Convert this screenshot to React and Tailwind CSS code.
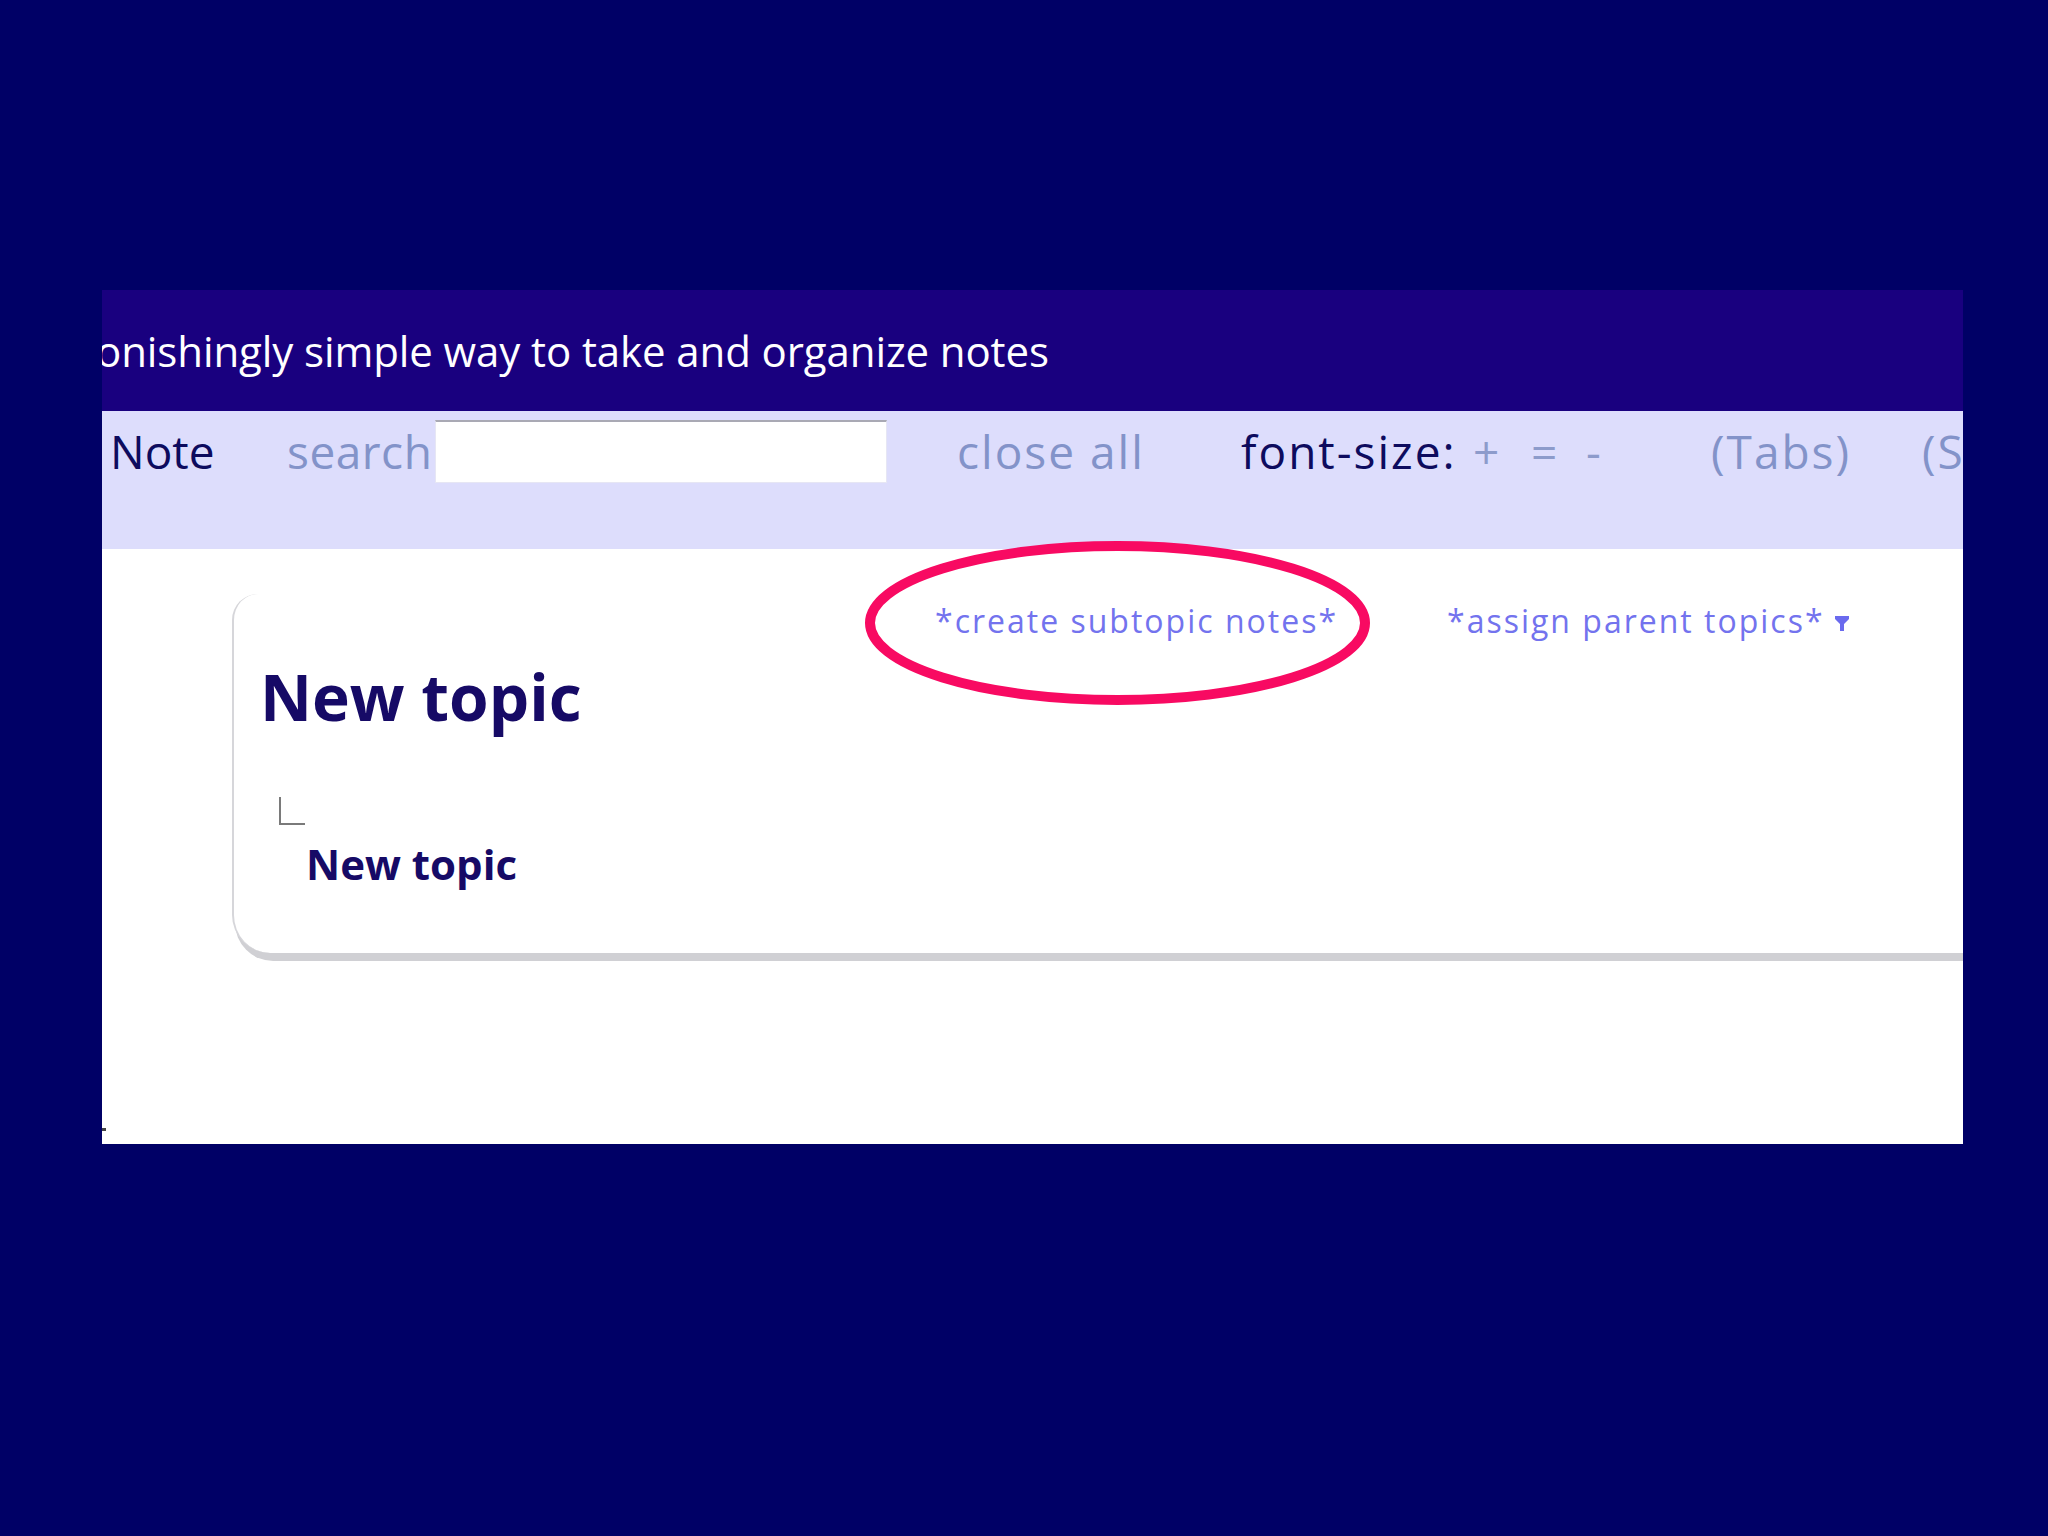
import React from 'react';

const font = { fontFamily: '"Open Sans", "DejaVu Sans", sans-serif' };

const Toolbar = () => (
  <div className="h-[138px] bg-[#ddddfc] shrink-0">
    <div className="flex items-center h-[63px] mt-[9px] pl-[8px] text-[46px] tracking-[2px] whitespace-nowrap">
      <span className="w-[177px] shrink-0 text-[#0d0b5e] tracking-[0px]">Note</span>
      <span className="w-[148px] shrink-0 text-[#8393c9] tracking-[0.5px]">search</span>
      <input
        type="text"
        className="w-[452px] h-[63px] shrink-0 bg-white border-t-2 border-t-[#a9a9b4] border-x border-x-[#e6e6f4] border-b border-b-[#e6e6f4] outline-none"
      />
      <span className="w-[284px] shrink-0 ml-[70px] text-[#8393c9]">close all</span>
      <span className="w-[232px] shrink-0 text-[#0d0b5e]">font-size:</span>
      <span className="w-[58px] shrink-0 text-[#8d9bcb]">+</span>
      <span className="w-[55px] shrink-0 text-[#8d9bcb]">=</span>
      <span className="w-[125px] shrink-0 text-[#8d9bcb]">-</span>
      <span className="w-[211px] shrink-0 text-[#8393c9]">(Tabs)</span>
      <span className="shrink-0 text-[#8393c9]">(S</span>
    </div>
  </div>
);

const TopicCard = () => (
  <div className="ml-[130px] mt-[45px] w-[1800px] shrink-0 bg-white border-l-2 border-[#d6d6da] rounded-tl-[26px] rounded-bl-[38px] shadow-[3px_8px_0_0_#d0d0d4] pl-[26px] pt-[7px] pb-[64px]">
    <div className="flex items-center h-[40px] text-[32px] tracking-[2px] text-[#7373ee] whitespace-nowrap">
      <span className="ml-[675px] w-[512px] shrink-0">*create subtopic notes*</span>
      <span className="shrink-0">*assign parent topics*</span>
      <svg className="ml-[10px] mt-[4px] shrink-0" width="14" height="15" viewBox="0 0 14 15">
        <path d="M0 0 H14 V3 L9 8 V15 H5 V8 L0 3 Z" fill="#6a6aee" />
      </svg>
      <span className="ml-[120px] shrink-0 text-[#c4c4f6]">(</span>
    </div>
    <h1 className="mt-[16px] text-[64px] leading-[79px] font-bold text-[#160a66]">New topic</h1>
    <div className="ml-[19px] mt-[61px] w-[26px] h-[28px] border-l-2 border-b-2 border-[#7a7a7a]" />
    <h2 className="ml-[46px] mt-[14px] text-[42px] leading-[50px] font-bold text-[#160a66]">New topic</h2>
  </div>
);

export default function App() {
  return (
    <div className="w-[2048px] h-[1536px] bg-[#000066] pt-[290px] pl-[102px]" style={font}>
      <div className="relative w-[1861px] h-[854px] bg-white overflow-hidden flex flex-col">
        <div className="h-[121px] shrink-0 bg-[#19007f] flex items-center">
          <span className="-ml-[6px] text-[42px] tracking-[-0.1px] text-white whitespace-nowrap">
            onishingly simple way to take and organize notes
          </span>
        </div>
        <Toolbar />
        <div className="flex-1 flex flex-col">
          <TopicCard />
        </div>

        {/* annotation ring round the subtopic link */}
        <svg className="absolute left-[763px] top-[251px]" width="505" height="164" viewBox="0 0 505 164">
          <ellipse cx="252.5" cy="82" rx="247.5" ry="77" fill="none" stroke="#f80a62" strokeWidth="10" />
        </svg>
        <span className="absolute left-0 top-[838px] w-[4px] h-[3px] bg-[#444]" />
      </div>
    </div>
  );
}
